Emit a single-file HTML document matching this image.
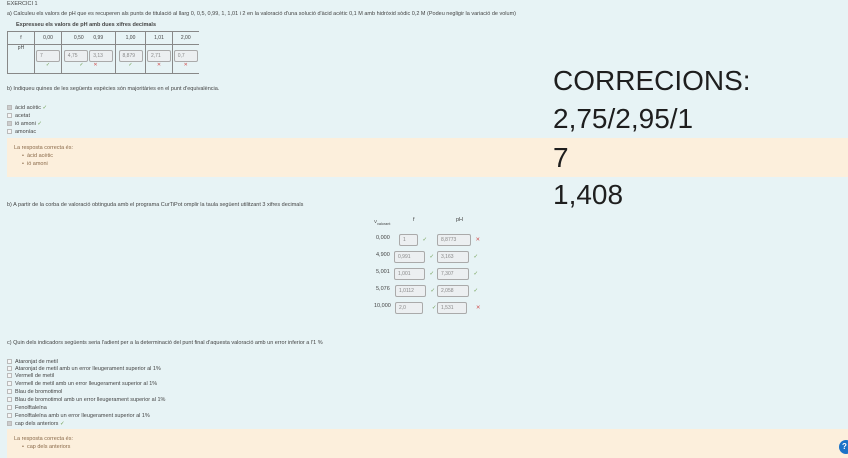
<!DOCTYPE html>
<html><head><meta charset="utf-8"><style>
*{margin:0;padding:0;box-sizing:border-box}
body{width:848px;height:458px;background:#e7f3f5;font-family:"Liberation Sans",sans-serif;position:relative;overflow:hidden;color:#444}
.a{position:absolute;white-space:nowrap}
.s{font-size:5.5px;color:#444}
.fb{position:absolute;left:7px;right:0;background:#fcefdc}
table{position:absolute;left:7px;top:31px;border-collapse:collapse;font-size:5px;color:#444}
td{border:1px solid #888;text-align:center;height:13px}
.in{display:inline-block;border:1px solid #aaa;border-radius:2px;background:#eceff1;height:12px;width:24px;font-size:5px;line-height:11px;text-align:left;padding-left:3px;color:#888}
.ok{color:#6a9a4a}.ko{color:#d05050}
.cb{display:inline-block;width:5px;height:5px;border:1px solid #bbb;background:#f5f5f5;margin-right:3px;vertical-align:middle}
.cb.c{background:#ccc}
.big{position:absolute;left:553px;font-size:28px;color:#1e1e1e;line-height:30px}
</style></head><body>
<div class="a s" style="left:7px;top:1px">EXERCICI 1</div>
<div class="a s" style="left:7px;top:11px">a) Calculeu els valors de pH que es recuperen als punts de titulació al llarg 0, 0,5, 0,99, 1, 1,01 i 2 en la valoració d'una solució d'àcid acètic 0,1 M amb hidròxid sòdic 0,2 M (Podeu negligir la variació de volum)</div>
<div class="a s" style="left:16px;top:22px;font-weight:bold">Expresseu els valors de pH amb dues xifres decimals</div>
<table>
<tr><td style="width:27px">f</td><td style="width:27px">0,00</td><td style="width:54px">0,50 &nbsp; &nbsp; &nbsp; 0,99</td><td style="width:30px">1,00</td><td style="width:27px">1,01</td><td style="width:26px;border-right:none">2,00</td></tr>
<tr><td style="vertical-align:top;height:29px">pH</td>
<td><span class="in">7</span><br><span class="ok">✓</span></td>
<td><span class="in">4,75</span> <span class="in">3,13</span><br><span class="ok">✓</span> &nbsp; &nbsp; &nbsp; <span class="ko">✕</span></td>
<td><span class="in">8,879</span><br><span class="ok">✓</span></td>
<td><span class="in">2,71</span><br><span class="ko">✕</span></td>
<td style="border-right:none"><span class="in">0,7</span><br><span class="ko">✕</span></td></tr>
</table>
<div class="a s" style="left:7px;top:86px">b) Indiqueu quines de les següents espècies són majoritàries en el punt d'equivalència.</div>
<div class="a s" style="left:7px;top:105px"><span class="cb c"></span>àcid acètic <span class="ok">✓</span></div>
<div class="a s" style="left:7px;top:113px"><span class="cb"></span>acetat</div>
<div class="a s" style="left:7px;top:121px"><span class="cb c"></span>ió amoni <span class="ok">✓</span></div>
<div class="a s" style="left:7px;top:129px"><span class="cb"></span>amoníac</div>
<div class="fb" style="top:138px;height:39px"></div>
<div class="a s" style="left:14px;top:145px;color:#8a6a4a">La resposta correcta és:</div>
<div class="a s" style="left:22px;top:153px;color:#8a6a4a">• &nbsp;àcid acètic</div>
<div class="a s" style="left:22px;top:161px;color:#8a6a4a">• &nbsp;ió amoni</div>
<div class="big" style="top:66px">CORRECIONS:</div>
<div class="big" style="top:104px">2,75/2,95/1</div>
<div class="big" style="top:143px">7</div>
<div class="big" style="top:180px">1,408</div>
<div class="a s" style="left:7px;top:202px">b) A partir de la corba de valoració obtinguda amb el programa CurTiPot omplir la taula següent utilitzant 3 xifres decimals</div>
<div class="a s" style="left:374px;top:219px;font-size:4.5px">V<sub>valorant</sub></div>
<div class="a s" style="left:413px;top:217px">f</div>
<div class="a s" style="left:456px;top:217px">pH</div>
<div class="a s" style="left:376px;top:235px">0,000</div>
<div class="a" style="left:399px;top:228px"><span class="in" style="width:19px">1</span> <span class="ok s">✓</span></div>
<div class="a" style="left:437px;top:228px"><span class="in" style="width:34px">8,8773</span> <span class="ko s">✕</span></div>
<div class="a s" style="left:376px;top:252px">4,900</div>
<div class="a" style="left:394px;top:245px"><span class="in" style="width:31px">0,991</span> <span class="ok s">✓</span></div>
<div class="a" style="left:437px;top:245px"><span class="in" style="width:32px">3,163</span> <span class="ok s">✓</span></div>
<div class="a s" style="left:376px;top:269px">5,001</div>
<div class="a" style="left:394px;top:262px"><span class="in" style="width:31px">1,001</span> <span class="ok s">✓</span></div>
<div class="a" style="left:437px;top:262px"><span class="in" style="width:32px">7,307</span> <span class="ok s">✓</span></div>
<div class="a s" style="left:376px;top:286px">5,076</div>
<div class="a" style="left:395px;top:279px"><span class="in" style="width:31px">1,0112</span> <span class="ok s">✓</span></div>
<div class="a" style="left:437px;top:279px"><span class="in" style="width:32px">2,058</span> <span class="ok s">✓</span></div>
<div class="a s" style="left:374px;top:303px">10,000</div>
<div class="a" style="left:395px;top:296px"><span class="in" style="width:28px">2,0</span> &nbsp;<span class="ok s">✓</span></div>
<div class="a" style="left:437px;top:296px"><span class="in" style="width:30px">1,531</span> &nbsp;<span class="ko s">✕</span></div>
<div class="a s" style="left:7px;top:340px">c) Quin dels indicadors següents seria l'adient per a la determinació del punt final d'aquesta valoració amb un error inferior a l'1 %</div>
<div class="a s" style="left:7px;top:359px"><span class="cb"></span>Ataronjat de metil</div>
<div class="a s" style="left:7px;top:366px"><span class="cb"></span>Ataronjat de metil amb un error lleugerament superior al 1%</div>
<div class="a s" style="left:7px;top:373px"><span class="cb"></span>Vermell de metil</div>
<div class="a s" style="left:7px;top:381px"><span class="cb"></span>Vermell de metil amb un error lleugerament superior al 1%</div>
<div class="a s" style="left:7px;top:389px"><span class="cb"></span>Blau de bromotimol</div>
<div class="a s" style="left:7px;top:397px"><span class="cb"></span>Blau de bromotimol amb un error lleugerament superior al 1%</div>
<div class="a s" style="left:7px;top:405px"><span class="cb"></span>Fenolftaleïna</div>
<div class="a s" style="left:7px;top:413px"><span class="cb"></span>Fenolftaleïna amb un error lleugerament superior al 1%</div>
<div class="a s" style="left:7px;top:421px"><span class="cb c"></span>cap dels anteriors <span class="ok">✓</span></div>
<div class="fb" style="top:429px;height:29px"></div>
<div class="a s" style="left:14px;top:436px;color:#8a6a4a">La resposta correcta és:</div>
<div class="a s" style="left:22px;top:444px;color:#8a6a4a">• &nbsp;cap dels anteriors</div>
<div class="a" style="left:839px;top:440px;width:14px;height:14px;border-radius:50%;background:#1a73c8;color:#fff;font-size:8px;line-height:14px;padding-left:3px;font-weight:bold">?</div>
</body></html>
